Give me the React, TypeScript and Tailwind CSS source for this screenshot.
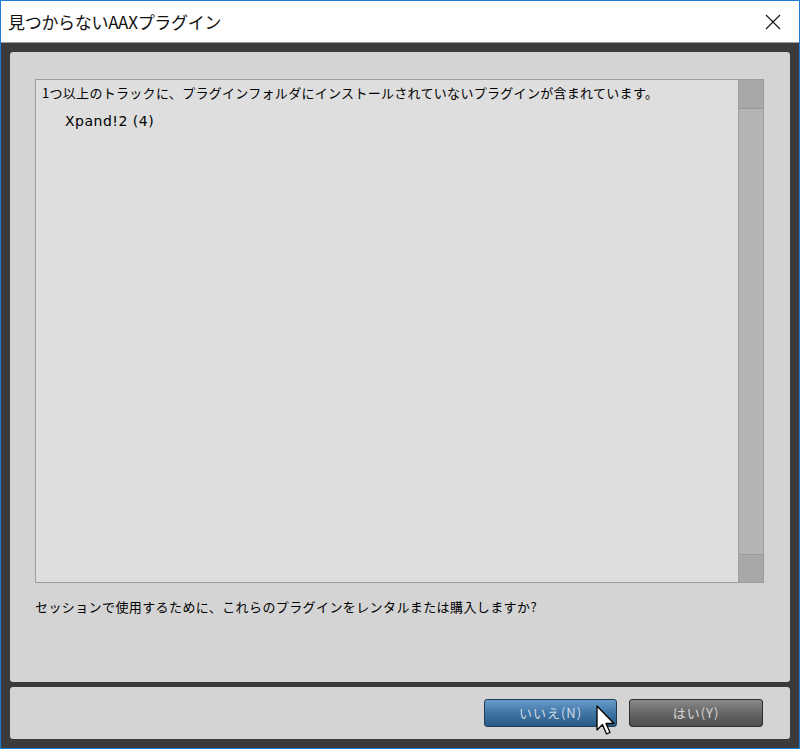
import React from 'react';

const jp = "font-['Noto_Sans_CJK_JP','Noto_Sans',sans-serif]";

function CloseIcon() {
  return (
    <svg width="16" height="16" viewBox="0 0 16 16" className="block">
      <path d="M1 1 L15 15 M15 1 L1 15" stroke="#111" strokeWidth="1.1" fill="none" />
    </svg>
  );
}

function Cursor() {
  return (
    <svg width="20" height="32" viewBox="0 0 20 32" className="absolute left-[595px] top-[704px]">
      <path
        d="M1 1 L1 25 L6.5 19.5 L10.5 29 L14 27.5 L10 18.5 L18 18.5 Z"
        fill="#fff"
        stroke="#000"
        strokeWidth="1.3"
        strokeLinejoin="round"
      />
    </svg>
  );
}

export default function App() {
  return (
    <div className={`relative w-[800px] h-[749px] flex flex-col border border-[#1a7fd4] ${jp}`}>
      {/* Title bar */}
      <div className="h-[42px] bg-white flex items-center justify-between pl-[7px] pr-[18px] border-b border-[#9a9a9a] shrink-0">
        <span className="text-[17px] text-[#111] tracking-[-0.3px]">見つからないAAXプラグイン</span>
        <CloseIcon />
      </div>

      {/* Body */}
      <div className="flex-1 bg-[#3b3b3b] pl-[9px] pr-[9px] pt-[9px] pb-[9px] flex flex-col gap-[5px]">
        <div className="flex-1 bg-[#d4d4d4] rounded-[3px] pl-[25px] pr-[26px] pt-[27px] flex flex-col">
          {/* List box */}
          <div className="h-[504px] flex border border-[#9c9c9c] bg-[#dedede]">
            <div className="flex-1 pl-[6px] pt-[3px] text-[13px] text-black">
              <div className="h-[20px] leading-[20px] tracking-[0.3px]">
                1つ以上のトラックに、プラグインフォルダにインストールされていないプラグインが含まれています。
              </div>
              <div className="h-[20px] leading-[20px] mt-[8px] pl-[23px] font-['DejaVu_Sans',sans-serif] text-[14px] tracking-[0.5px]">
                Xpand!2 (4)
              </div>
            </div>
            <div className="w-[25px] flex flex-col bg-[#b4b4b4] border-l border-[#a0a0a0]">
              <div className="h-[29px] bg-[#a8a8a8] border-b border-[#999]" />
              <div className="flex-1" />
              <div className="h-[28px] bg-[#a8a8a8] border-t border-[#999]" />
            </div>
          </div>
          <div className="mt-[14px] text-[13px] leading-[20px] text-black tracking-[0.4px]">
            セッションで使用するために、これらのプラグインをレンタルまたは購入しますか?
          </div>
        </div>

        {/* Button bar */}
        <div className="h-[52px] bg-[#d4d4d4] rounded-[3px] flex items-center justify-end gap-[12px] pr-[27px] shrink-0">
          <button className="w-[133px] h-[28px] rounded-[3px] border border-[#1d3d58] bg-gradient-to-b from-[#6a9ccb] via-[#3f76a6] to-[#2a5a84] text-[13px] text-[#cfd9e4] tracking-[1px]">
            いいえ(N)
          </button>
          <button className="w-[134px] h-[28px] rounded-[3px] border border-[#2e2e2e] bg-gradient-to-b from-[#8a8a8a] via-[#666] to-[#505050] text-[13px] text-[#d6d6d6] tracking-[1px]">
            はい(Y)
          </button>
        </div>
      </div>

      <Cursor />
    </div>
  );
}
